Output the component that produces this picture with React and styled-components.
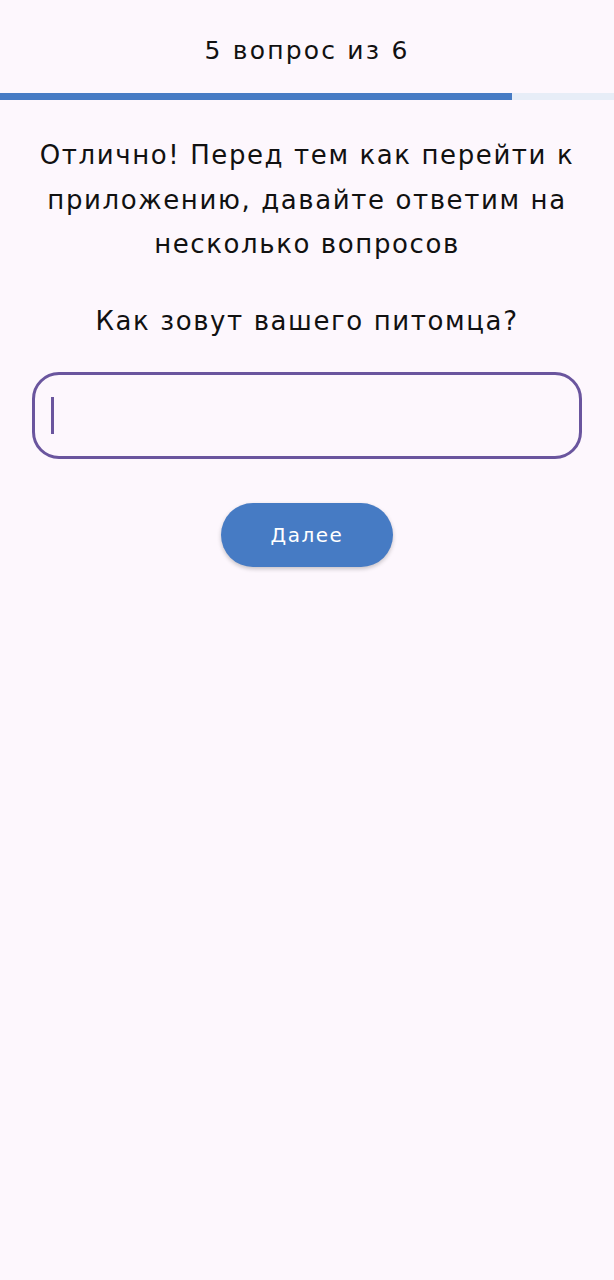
import React from 'react'
import styled, { createGlobalStyle } from 'styled-components'

const GlobalStyle = createGlobalStyle`
  html, body {
    margin: 0;
    padding: 0;
    background: #fdf7fd;
  }
  body {
    font-family: 'DejaVu Sans', 'Noto Sans', sans-serif;
    color: #111;
  }
  @keyframes blink {
    50% { opacity: 0; }
  }
`

const Screen = styled.div`
  min-height: 1280px;
  background: #fdf7fd;
  display: flex;
  flex-direction: column;
`

const Header = styled.header`
  height: 93px;
  display: flex;
  align-items: center;
  justify-content: center;
  font-size: 25px;
  letter-spacing: 2.2px;
  color: #111;
  padding-top: 8px;
  box-sizing: border-box;
`

const Track = styled.div`
  height: 7px;
  background: #e7edf7;
`

const Fill = styled.div`
  height: 100%;
  background: #467bc4;
`

const Body = styled.main`
  display: flex;
  flex-direction: column;
  align-items: center;
  padding: 33px 32px 0;
`

const Lead = styled.p`
  margin: 0;
  font-size: 26px;
  letter-spacing: 1.6px;
  line-height: 44.5px;
  text-align: center;
  color: #111;
`

const Question = styled.p`
  margin: 34px 0 0;
  font-size: 26px;
  letter-spacing: 1.6px;
  line-height: 40px;
  text-align: center;
  color: #111;
`

const Field = styled.div`
  margin-top: 31px;
  align-self: stretch;
  height: 87px;
  box-sizing: border-box;
  border: 3px solid #6a559e;
  border-radius: 27px;
  display: flex;
  align-items: center;
  padding-left: 16px;
`

const Caret = styled.span`
  width: 3px;
  height: 37px;
  background: #6a559e;
  animation: blink 1s step-end infinite;
`

const Button = styled.button`
  margin-top: 44px;
  width: 172px;
  height: 64px;
  border: none;
  border-radius: 32px;
  background: #467bc4;
  color: #fff;
  font-family: 'DejaVu Sans', 'Noto Sans', sans-serif;
  font-size: 20px;
  letter-spacing: 1.5px;
  box-shadow: 0 2px 4px rgba(0, 0, 0, 0.22);
  cursor: pointer;
`

export default function App () {
  const step = 5
  const total = 6
  return (
    <Screen>
      <GlobalStyle />
      <Header>{step} вопрос из {total}</Header>
      <Track>
        <Fill style={{ width: `${(step / total) * 100}%` }} />
      </Track>
      <Body>
        <Lead>
          Отлично! Перед тем как перейти к<br />
          приложению, давайте ответим на<br />
          несколько вопросов
        </Lead>
        <Question>Как зовут вашего питомца?</Question>
        <Field>
          <Caret />
        </Field>
        <Button>Далее</Button>
      </Body>
    </Screen>
  )
}
